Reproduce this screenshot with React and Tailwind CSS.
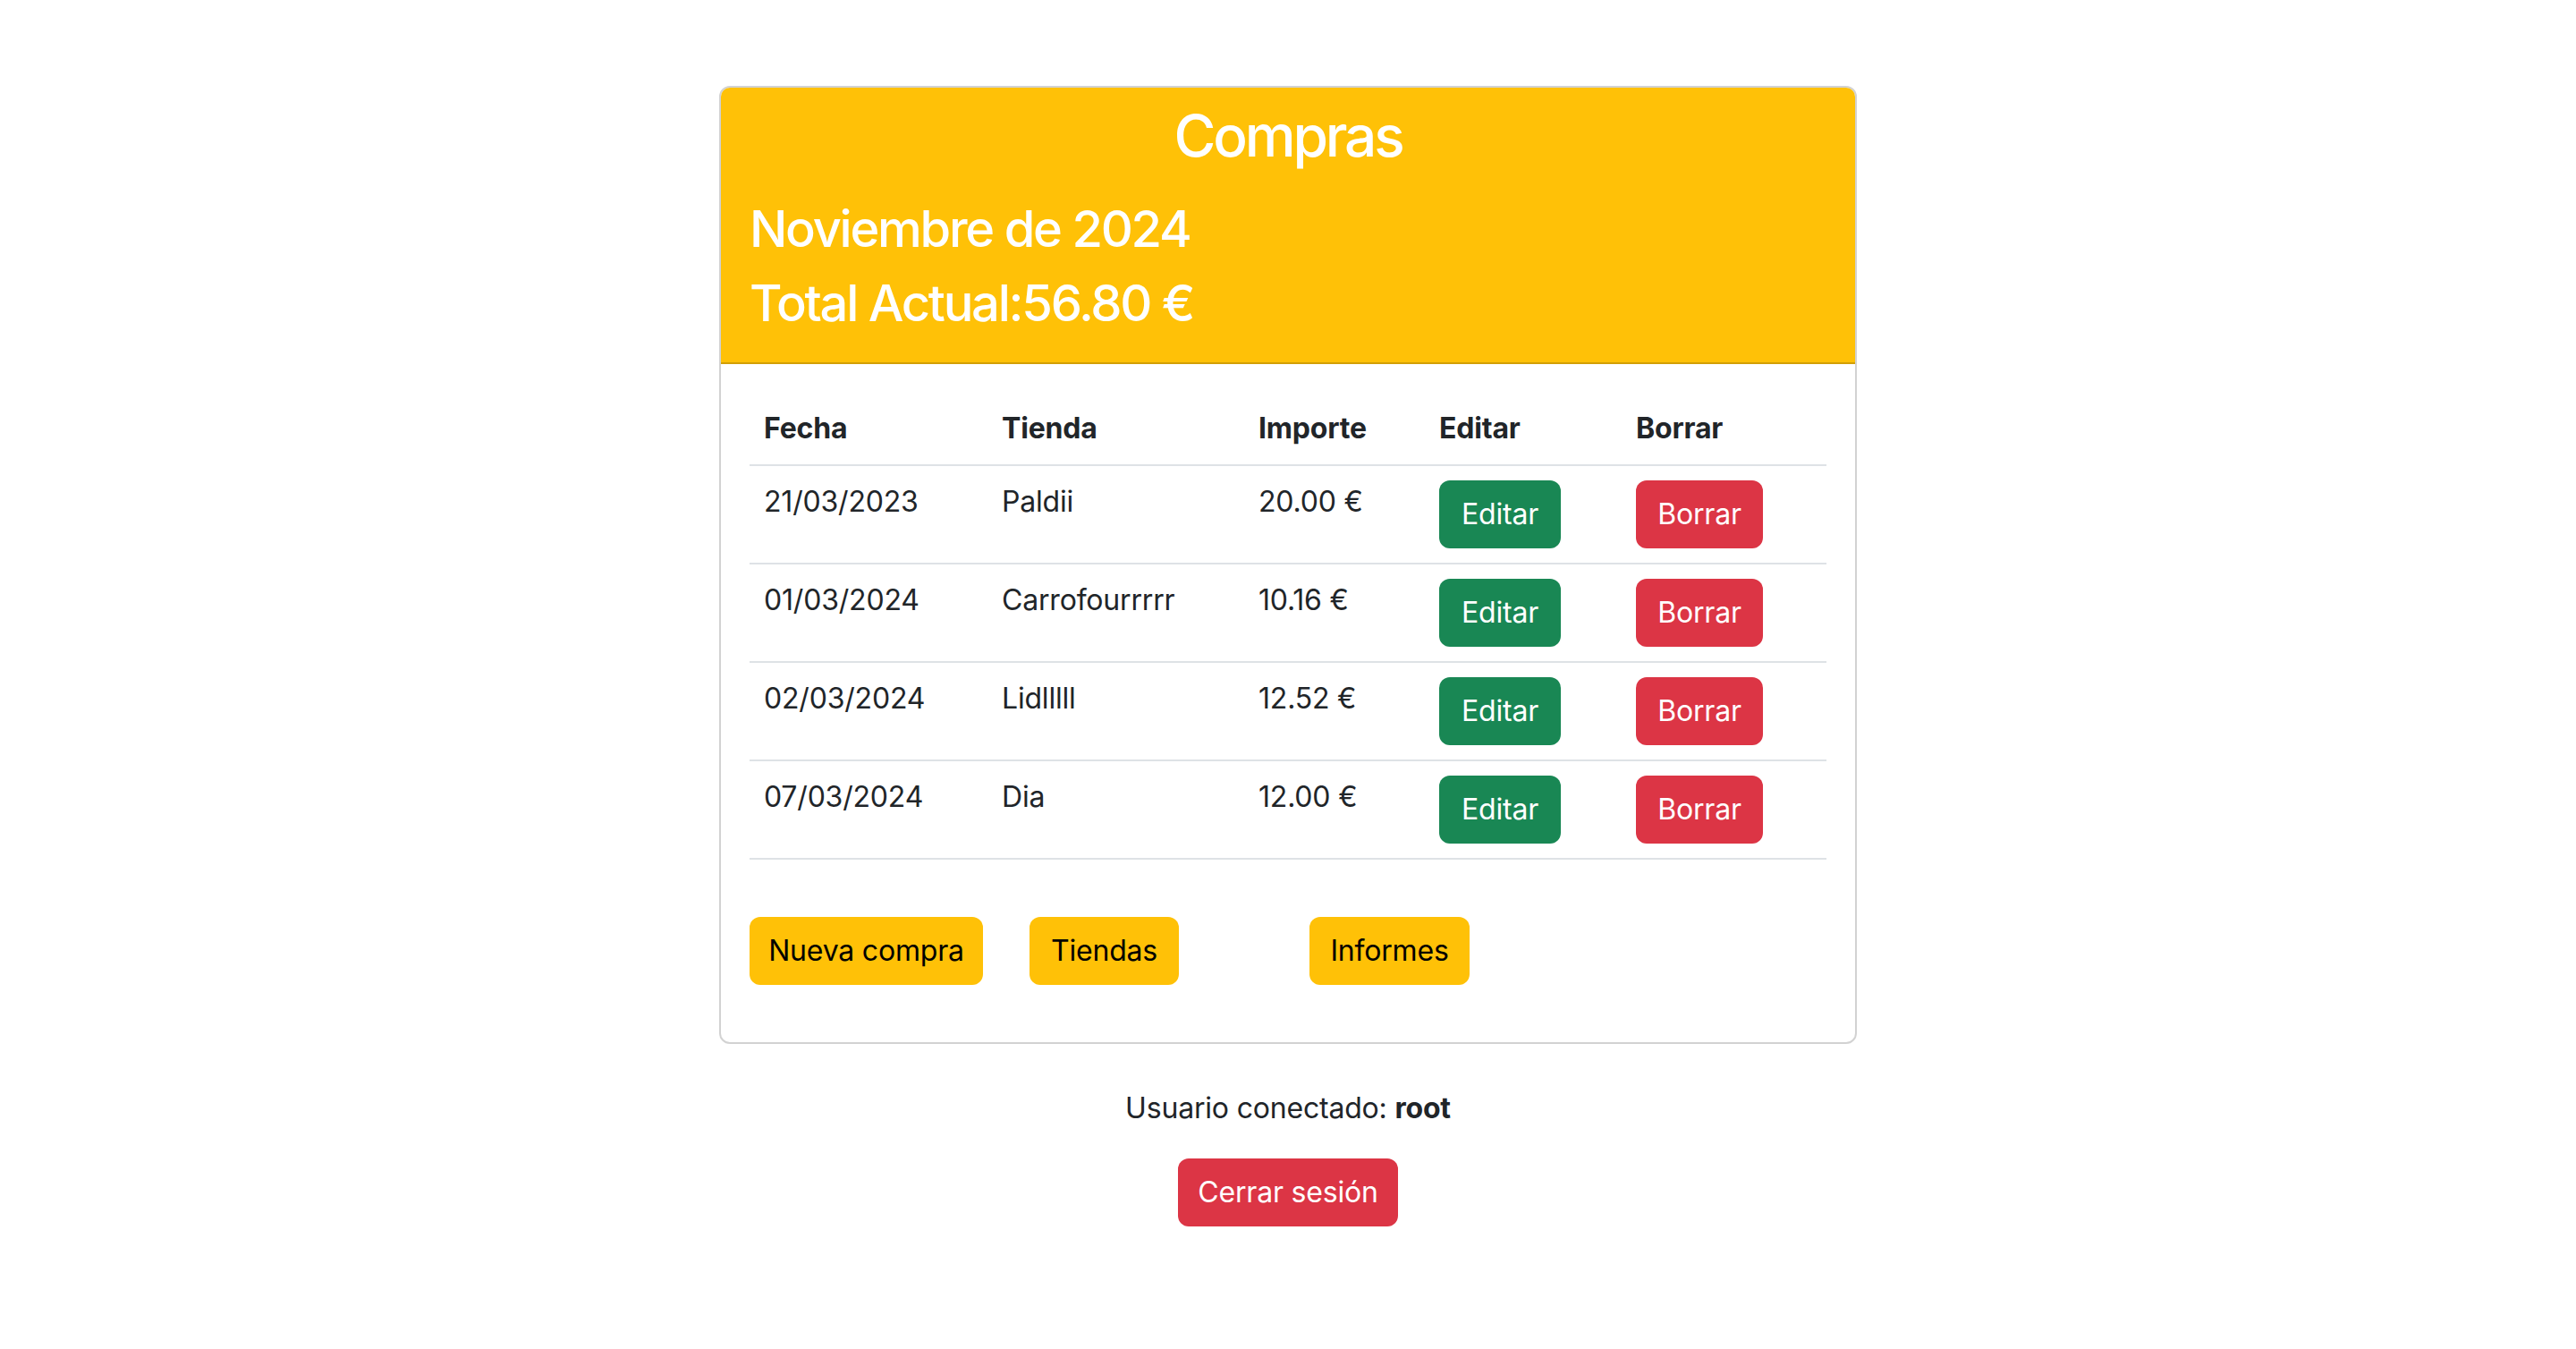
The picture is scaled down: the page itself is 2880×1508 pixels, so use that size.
import React from 'react'

const ROWS = [
  { fecha: '21/03/2023', tienda: 'Paldii', importe: '20.00 €' },
  { fecha: '01/03/2024', tienda: 'Carrofourrrrr', importe: '10.16 €' },
  { fecha: '02/03/2024', tienda: 'Lidlllll', importe: '12.52 €' },
  { fecha: '07/03/2024', tienda: 'Dia', importe: '12.00 €' },
]

export default function App() {
  return (
    <div className="min-h-screen bg-white font-['Inter','Liberation_Sans',sans-serif] tracking-[-0.012em] text-[#212529] flex flex-col items-center pt-[96px]">
      {/* Card */}
      <div className="w-[1272px] border-2 border-black/[0.175] rounded-[12px] overflow-hidden">
        <div className="bg-[#ffc107] text-white px-[32px] py-[16px] border-b-2 border-black/[0.175]">
          <h2 className="text-[64px] leading-[1.2] font-medium tracking-[-0.05em] text-center mb-[32px]">Compras</h2>
          <h3 className="text-[56px] leading-[1.2] font-medium tracking-[-0.04em] mb-[16px]">Noviembre de 2024</h3>
          <h3 className="text-[56px] leading-[1.2] font-medium tracking-[-0.04em] mb-[16px]">Total Actual:56.80 €</h3>
        </div>

        <div className="px-[32px] pt-[32px] pb-[32px]">
          <table className="w-full text-[32px] leading-[48px] border-collapse">
            <thead>
              <tr className="border-b-2 border-[#dee2e6]">
                <th className="w-[266px] p-[16px] text-left font-bold align-bottom">Fecha</th>
                <th className="w-[287px] p-[16px] text-left font-bold align-bottom">Tienda</th>
                <th className="w-[202px] p-[16px] text-left font-bold align-bottom">Importe</th>
                <th className="w-[220px] p-[16px] text-left font-bold align-bottom">Editar</th>
                <th className="p-[16px] text-left font-bold align-bottom">Borrar</th>
              </tr>
            </thead>
            <tbody>
              {ROWS.map((r) => (
                <tr key={r.fecha} className="border-b-2 border-[#dee2e6]">
                  <td className="p-[16px] align-top">{r.fecha}</td>
                  <td className="p-[16px] align-top">{r.tienda}</td>
                  <td className="p-[16px] align-top">{r.importe}</td>
                  <td className="p-[16px] align-top">
                    <button className="w-[136px] h-[76px] rounded-[12px] bg-[#198754] text-white leading-[48px]">Editar</button>
                  </td>
                  <td className="p-[16px] align-top">
                    <button className="w-[142px] h-[76px] rounded-[12px] bg-[#dc3545] text-white leading-[48px]">Borrar</button>
                  </td>
                </tr>
              ))}
            </tbody>
          </table>

          <div className="flex mt-[64px] mb-[32px] text-[32px] leading-[48px] text-black">
            <button className="w-[261px] h-[76px] rounded-[12px] bg-[#ffc107]">Nueva compra</button>
            <button className="ml-[52px] w-[167px] h-[76px] rounded-[12px] bg-[#ffc107]">Tiendas</button>
            <button className="ml-[146px] w-[179px] h-[76px] rounded-[12px] bg-[#ffc107]">Informes</button>
          </div>
        </div>
      </div>

      <p className="mt-[48px] mb-[32px] text-[32px] leading-[48px] text-center">
        Usuario conectado: <b className="font-bold">root</b>
      </p>
      <button className="w-[246px] h-[76px] rounded-[12px] bg-[#dc3545] text-white text-[32px] leading-[48px]">Cerrar sesión</button>
    </div>
  )
}
